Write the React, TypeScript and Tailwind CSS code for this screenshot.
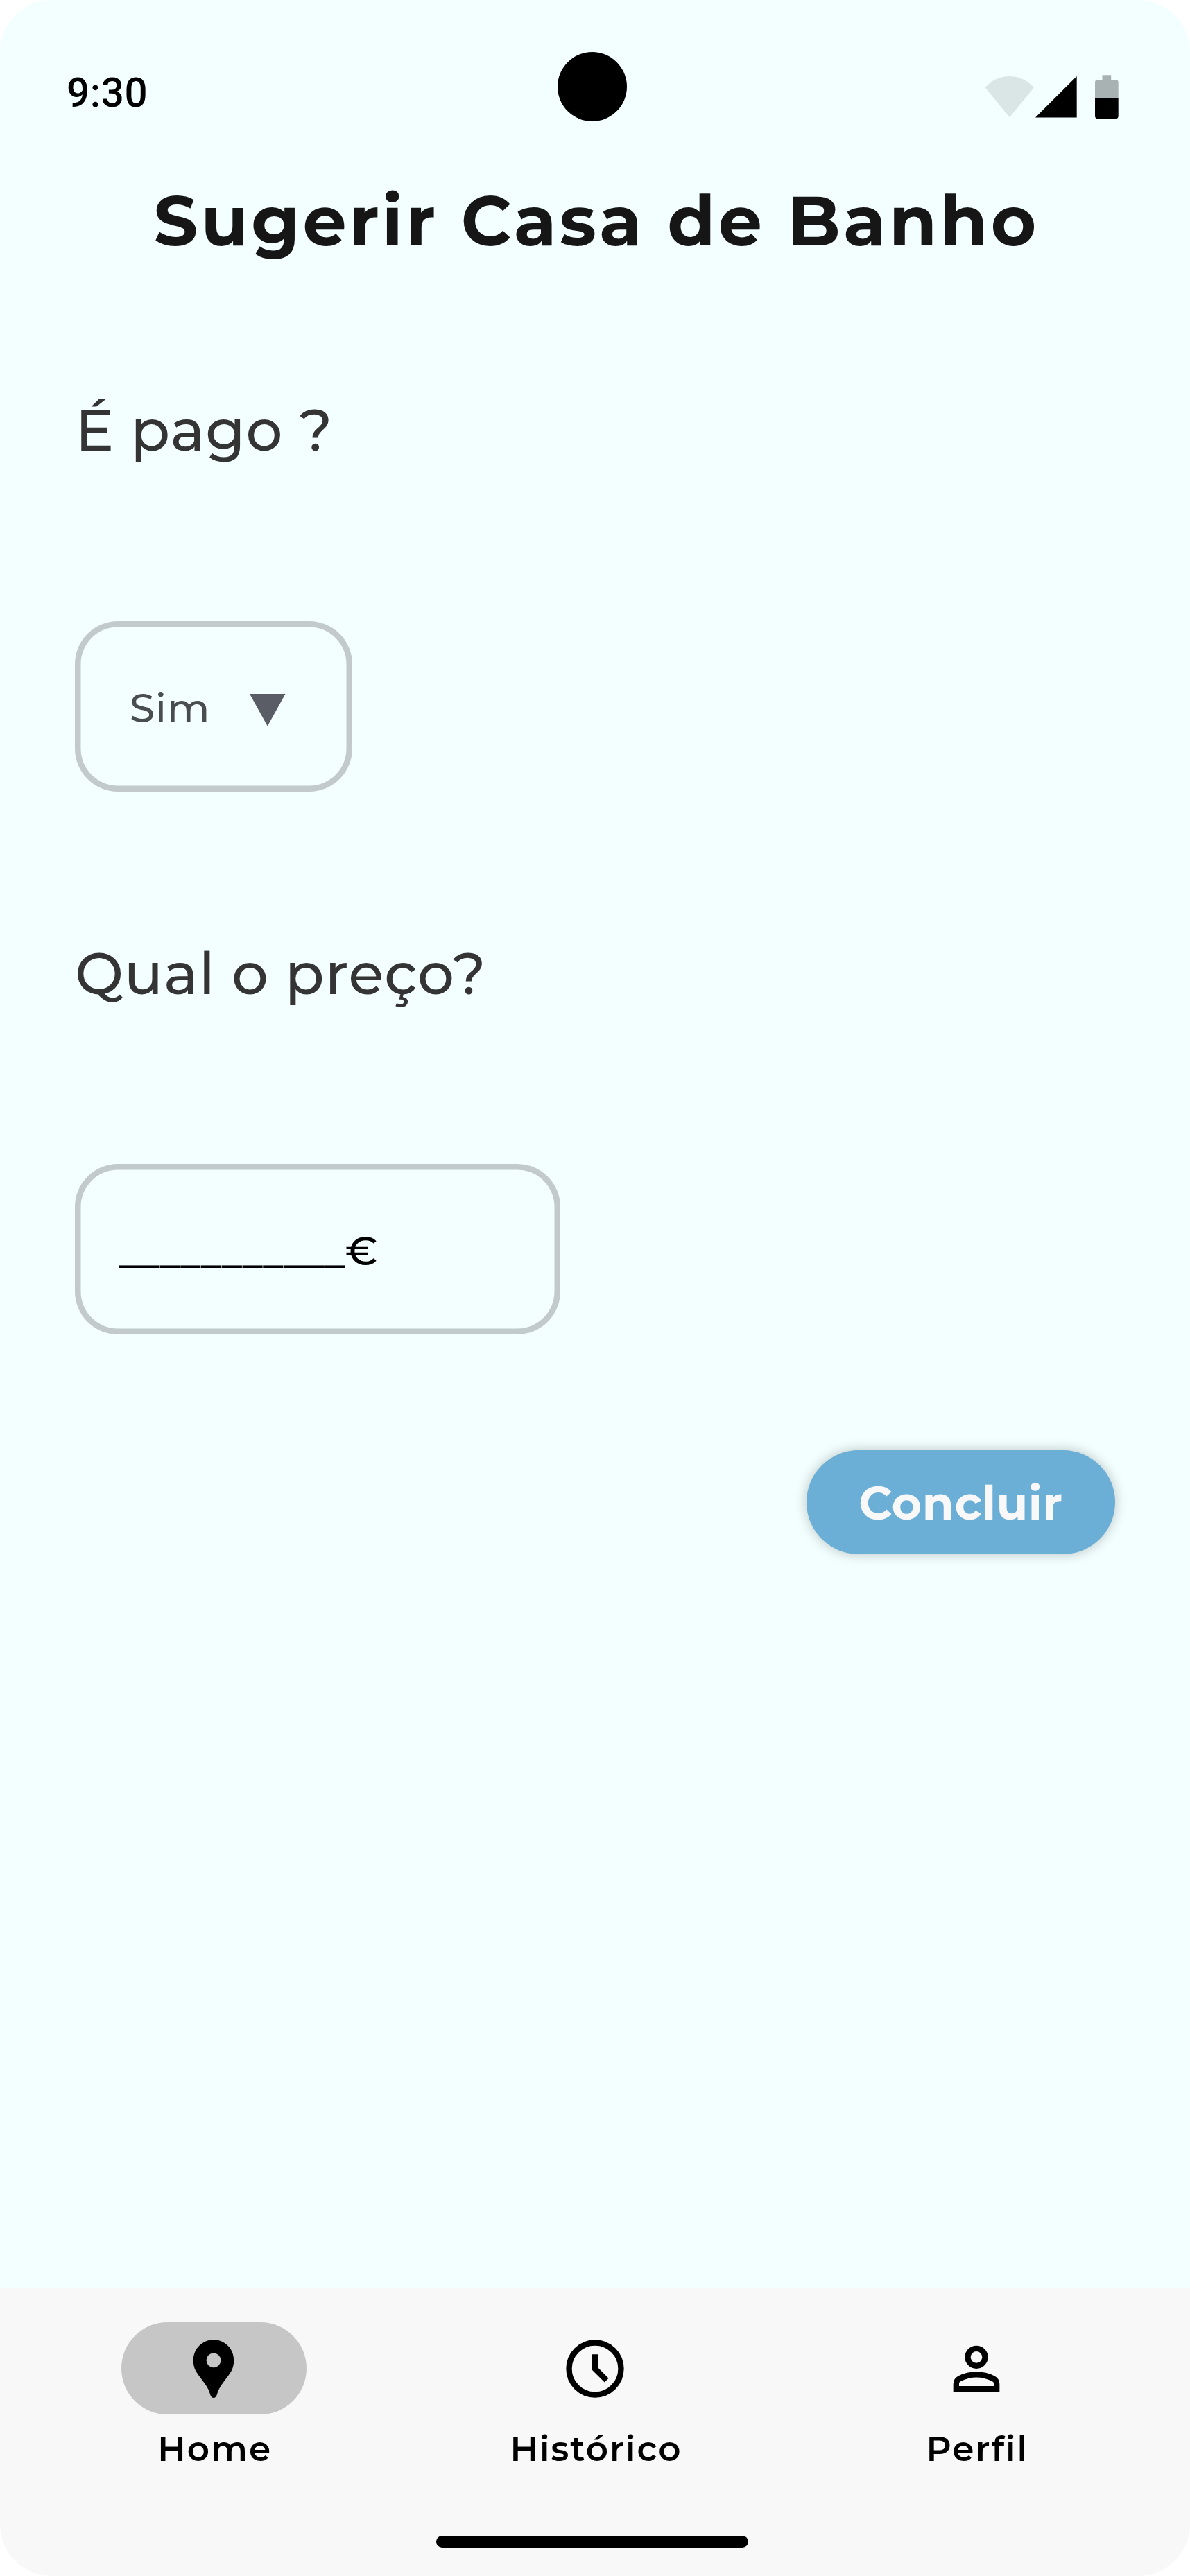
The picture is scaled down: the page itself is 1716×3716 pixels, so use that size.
import type { ReactNode } from "react";

function WifiIcon() {
  return (
    <svg className="h-[60px] w-[72px]" viewBox="0 0 72 60">
      <path d="M35.800 59.200 0.600 16.300C9.500 6 22 0 35.800 0S62.100 6 71 16.300Z" fillOpacity={0.1} />
    </svg>
  );
}

function SignalIcon() {
  return (
    <svg className="h-[60px] w-[60px]" viewBox="0 0 60 60">
      <path d="M0 59.400H59.700V0Z" />
    </svg>
  );
}

function BatteryIcon() {
  return (
    <svg className="h-[64px] w-[34px]" viewBox="0 0 34 64">
      <path
        d="M10.500 0.300H23.200V7H29.700A4 4 0 0 1 33.700 11V34H0V11A4 4 0 0 1 4 7H10.500Z"
        fillOpacity={0.3}
      />
      <path d="M0 34H33.700V59.200A4 4 0 0 1 29.700 63.200H4A4 4 0 0 1 0 59.200Z" />
    </svg>
  );
}

function PinIcon() {
  return (
    <svg className="size-[100px]" viewBox="0 0 24 24">
      <path
        fillRule="evenodd"
        d="M12 2C8.130 2 5 5.130 5 9C5 10.700 5.300 11.900 6.100 13.200C7 14.700 7.900 15.700 8.700 16.800C9.500 17.900 10.100 18.900 10.500 19.900C10.700 20.400 10.800 20.900 10.960 21.300C11.150 21.800 11.500 22.050 12 22.050S12.850 21.800 13.040 21.300C13.200 20.900 13.300 20.400 13.500 19.900C13.900 18.900 14.500 17.900 15.300 16.800C16.100 15.700 17 14.700 17.900 13.200C18.700 11.900 19 10.700 19 9C19 5.130 15.870 2 12 2ZM12 11.570A2.500 2.500 0 1 1 12 6.570A2.500 2.500 0 0 1 12 11.570Z"
      />
    </svg>
  );
}

function ClockIcon() {
  return (
    <svg className="size-[100px]" viewBox="0 0 24 24">
      <circle cx="12" cy="12" r="9" fill="none" stroke="black" strokeWidth="2" />
      <path d="M11 7V12.400L15.300 16.700L16.700 15.300L13 11.600V7Z" />
    </svg>
  );
}

function PersonIcon() {
  return (
    <svg className="size-[100px]" viewBox="0 0 24 24">
      <circle cx="12" cy="8" r="3" fill="none" stroke="black" strokeWidth="2" />
      <path
        fillRule="evenodd"
        d="M4 20V17.200Q4 16.350 4.438 15.638Q4.875 14.925 5.600 14.550Q7.150 13.775 8.750 13.388Q10.350 13 12 13Q13.650 13 15.250 13.388Q16.850 13.775 18.400 14.550Q19.125 14.925 19.562 15.638Q20 16.350 20 17.200V20ZM6 18H18V17.200Q18 16.925 17.862 16.700Q17.725 16.475 17.500 16.350Q16.150 15.675 14.775 15.338Q13.400 15 12 15Q10.600 15 9.225 15.338Q7.850 15.675 6.500 16.350Q6.275 16.475 6.138 16.700Q6 16.925 6 17.200Z"
      />
    </svg>
  );
}

function NavItem({ icon, label, active = false }: { icon: ReactNode; label: string; active?: boolean }) {
  return (
    <a className="flex flex-1 flex-col items-center">
      <span
        className={
          active
            ? "flex h-[133.3px] w-[266.7px] items-center justify-center rounded-full bg-[#c6c6c6]"
            : "flex h-[133.3px] w-[266.7px] items-center justify-center rounded-full"
        }
      >
        {icon}
      </span>
      <span className="mt-[16.7px] pl-[3px] text-[50px] leading-[65px] font-semibold tracking-[2.083px]">{label}</span>
    </a>
  );
}

export default function App() {
  return (
    <div className="relative flex h-[3716px] w-[1716px] flex-col overflow-hidden rounded-[75px] bg-[#f3ffff] font-['Montserrat','Inter',sans-serif] text-black">
      <header className="flex h-[216px] items-start justify-between pt-[92px] pr-[103px] pl-[96px]">
        <time className="font-['Roboto'] text-[58.33px] leading-[84px] font-medium tracking-[0.583px]">9:30</time>
        <div className="flex items-start pt-[16px]">
          <div className="flex gap-[1px] pt-[2px]">
            <WifiIcon />
            <SignalIcon />
          </div>
          <div className="ml-[26px]">
            <BatteryIcon />
          </div>
        </div>
      </header>
      <div className="absolute top-[75px] left-[804px] size-[100px] rounded-full bg-black" />

      <main className="flex flex-1 flex-col items-start px-[108px] pt-[36px]">
        <h1 className="w-full pl-[4px] text-center text-[100px] leading-[133px] font-bold tracking-[4.167px] whitespace-nowrap text-[#161616]">
          Sugerir Casa de Banho
        </h1>

        <h2 className="mt-[185px] pl-[0.500px] text-[83.33px] leading-[100px] font-medium tracking-[0.800px] text-[#333433]">
          É pago ?
        </h2>
        <button className="mt-[226px] flex h-[246px] w-[400px] items-center rounded-[62px] pt-[4px] pl-[79px] shadow-[inset_0_0_0_8.5px_#c2cacb]">
          <span className="text-[58.33px] leading-[83px] font-medium tracking-[0.583px] text-[#4a4d4d]">Sim</span>
          <svg className="mt-[6px] ml-[57px] h-[47px] w-[52px]" viewBox="0 0 52 47">
            <path d="M0 0H51.500L25.750 46.500Z" fill="#5a5d65" />
          </svg>
        </button>

        <h2 className="mt-[212px] text-[83.33px] leading-[100px] font-medium tracking-[0.800px] text-[#333433]">
          Qual o preço?
        </h2>
        <div className="mt-[225px] flex h-[246px] w-[700px] items-center rounded-[62px] pt-[4px] pl-[63px] shadow-[inset_0_0_0_8.5px_#c2cacb]">
          <span className="text-[58.33px] leading-[83px] font-medium tracking-[0.583px]">___________€</span>
        </div>

        <button className="mt-[167px] flex h-[150px] w-[445.500px] items-center justify-center self-end rounded-full bg-[#6baed6] pt-[2px] text-[66.67px] leading-[83px] font-bold tracking-[0.417px] text-[#f8f8f8] shadow-[0_0_16.7px_rgba(0,0,0,0.25)]">
          Concluir
        </button>
      </main>

      <nav className="h-[415.5px] bg-[#f8f8f8]">
        <div className="flex px-[33.3px] pt-[49.5px]">
          <NavItem icon={<PinIcon />} label="Home" active />
          <NavItem icon={<ClockIcon />} label="Histórico" />
          <NavItem icon={<PersonIcon />} label="Perfil" />
        </div>
        <div className="mt-[93.500px] ml-[629px] h-[17px] w-[450px] rounded-full bg-black" />
      </nav>
    </div>
  );
}
